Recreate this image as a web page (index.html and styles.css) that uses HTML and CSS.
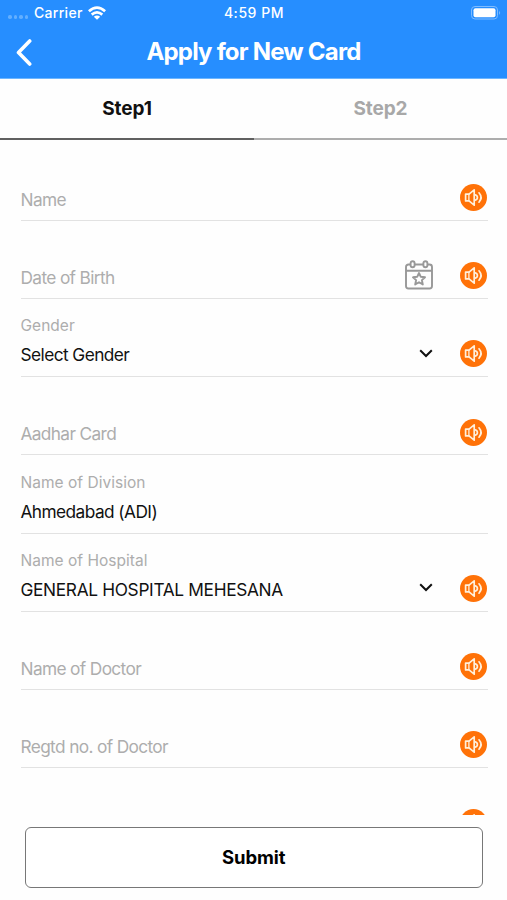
FILE: index.html
```html
<!DOCTYPE html>
<html lang="en">
<head>
<meta charset="utf-8">
<title>Apply for New Card</title>
<link rel="stylesheet" href="styles.css">
</head>
<body>
<svg class="defs" aria-hidden="true">
  <symbol id="speaker" viewBox="0 0 27 27">
    <circle cx="13.5" cy="13.5" r="13.5" fill="#ff7208"/>
    <g fill="none" stroke="#fff0dc" stroke-width="1.7" stroke-linejoin="round" stroke-linecap="round">
      <path d="M5.6 10.1H9L14.2 5.8V21.2L9 16.9H5.6Z"/>
      <path d="M8.9 10.2V16.8" stroke-width="1.3"/>
      <path d="M15.2 10.9Q17.4 11.4 17.4 13.5T15.2 16.1"/>
      <path d="M19 8.8Q23.2 13.5 19 18.2"/>
    </g>
  </symbol>
  <symbol id="chevron" viewBox="0 0 14 9">
    <path d="M1.2 1.3L7 7L12.8 1.3" fill="none" stroke="#111" stroke-width="2"/>
  </symbol>
</svg>
<div class="app">
  <header class="header">
    <div class="status">
      <div class="carrier">
        <span class="dots"><i></i><i></i><i></i><i></i></span>
        <span class="carrier-name">Carrier</span>
        <svg class="wifi" viewBox="0 0 18 14"><g fill="none" stroke="#fff" stroke-width="2.7"><path d="M.9 5.2Q9-2 17.1 5.2"/><path d="M3.7 8.6Q9 4.2 14.3 8.6"/></g><path d="M9 13.8L5.8 10.8Q9 8.3 12.2 10.8Z" fill="#fff"/></svg>
      </div>
      <span class="time">4:59 PM</span>
      <svg class="battery" viewBox="0 0 30 14"><rect x=".5" y=".5" width="26" height="12.5" rx="3.5" fill="none" stroke="#7fbcff"/><rect x="2.5" y="2.2" width="22" height="9" rx="2" fill="#fff"/><path d="M28.2 4.5Q30 6.7 28.2 9Z" fill="#8cc3ff"/></svg>
    </div>
    <div class="nav">
      <svg class="back" viewBox="0 0 16 27"><path d="M13.7 2L2.5 13.5L13.7 25" fill="none" stroke="#fff" stroke-width="3.6" stroke-linecap="round" stroke-linejoin="round"/></svg>
      <h1 class="title">Apply for New Card</h1>
    </div>
  </header>
  <nav class="tabs">
    <div class="tab active"><span>Step1</span></div>
    <div class="tab"><span>Step2</span></div>
  </nav>
  <main class="form">
    <div class="row"><div class="field"><span class="hint">Name</span></div><svg class="sound"><use href="#speaker"/></svg></div>
    <div class="row"><div class="field"><span class="hint">Date of Birth</span></div>
      <svg class="calendar" viewBox="0 0 28 30"><g fill="none" stroke="#989898" stroke-width="1.9" stroke-linejoin="round"><path d="M5 4.5H3.5Q1 4.5 1 7V26Q1 28.5 3.5 28.5H24.5Q27 28.5 27 26V7Q27 4.5 24.5 4.5H23M10 4.5H18M1 10.8H27"/><rect x="5.6" y="1.2" width="4" height="6" rx="2"/><rect x="18.4" y="1.2" width="4" height="6" rx="2"/><path d="M14 13L15.8 16.8L20 17.3L16.9 20.1L17.8 24.5L14 22.3L10.2 24.5L11.1 20.1L8 17.3L12.2 16.8Z"/></g></svg>
      <svg class="sound"><use href="#speaker"/></svg></div>
    <div class="row"><div class="field"><span class="label">Gender</span><span class="value">Select Gender</span></div><svg class="chevron"><use href="#chevron"/></svg><svg class="sound"><use href="#speaker"/></svg></div>
    <div class="row"><div class="field"><span class="hint">Aadhar Card</span></div><svg class="sound"><use href="#speaker"/></svg></div>
    <div class="row"><div class="field"><span class="label">Name of Division</span><span class="value">Ahmedabad (ADI)</span></div></div>
    <div class="row"><div class="field"><span class="label">Name of Hospital</span><span class="value caps">GENERAL HOSPITAL MEHESANA</span></div><svg class="chevron"><use href="#chevron"/></svg><svg class="sound"><use href="#speaker"/></svg></div>
    <div class="row"><div class="field"><span class="hint">Name of Doctor</span></div><svg class="sound"><use href="#speaker"/></svg></div>
    <div class="row"><div class="field"><span class="hint">Regtd no. of Doctor</span></div><svg class="sound"><use href="#speaker"/></svg></div>
    <div class="row"><div class="field"></div><svg class="sound"><use href="#speaker"/></svg></div>
  </main>
  <footer class="footer"><button class="submit" type="button">Submit</button></footer>
</div>
</body>
</html>
```

FILE: styles.css
```css
* { box-sizing: border-box; }
body { margin: 0; background: #fefefe; font-family: Inter, "Liberation Sans", sans-serif; color: #111; }
.defs { display: none; }
.app { display: flex; flex-direction: column; width: 507px; height: 900px; overflow: hidden; }
.header { height: 79px; flex: none; background: #268eff; color: #fff; border-bottom: 1px solid #6db6ff; }
.status { display: grid; grid-template-columns: 1fr auto 1fr; align-items: center; height: 26px; padding: 0 7px 0 8px; font-size: 14px; font-weight: 500; line-height: 18px; }
.carrier { display: flex; align-items: center; }
.dots { display: flex; gap: 2px; width: 26px; padding-top: 8px; }
.dots i { width: 3.5px; height: 3.5px; border-radius: 50%; background: #63afff; }
.carrier-name { width: 49px; letter-spacing: .3px; white-space: nowrap; }
.time { letter-spacing: .55px; }
.wifi { width: 18px; height: 14px; margin-left: 5px; }
.battery { width: 30px; height: 14px; justify-self: end; margin-right: -1px; }
.nav { display: grid; grid-template-columns: 50px 1fr 50px; align-items: center; height: 52px; }
.back { width: 16px; height: 27px; margin-left: 16px; }
.title { margin: 0; text-align: center; font-size: 24px; font-weight: 700; letter-spacing: -.8px; line-height: 30px; white-space: nowrap; }
.tabs { display: grid; grid-template-columns: 254px 253px; flex: none; height: 61px; font-size: 19px; line-height: 23px; font-weight: 700; letter-spacing: -.1px; }
.tab { display: flex; align-items: center; justify-content: center; color: #a8a8a8; border-bottom: 2px solid #adadad; }
.active { color: #111; border-color: #606060; }
.form { flex: none; height: 674.5px; padding: 2.6px 19.5px 0 20.5px; overflow: hidden; }
.row { display: flex; align-items: flex-end; height: 78.2px; border-bottom: 1.4px solid #e2e2e2; }
.field { flex: 1; display: flex; flex-direction: column; align-items: flex-start; padding-bottom: 9px; white-space: nowrap; }
.hint { font-size: 17.3px; line-height: 24px; color: #adadad; letter-spacing: -.64px; margin-bottom: -1px; }
.label { font-size: 15.5px; line-height: 20px; color: #adadad; margin-bottom: 7px; letter-spacing: .03px; }
.value { font-size: 17.3px; line-height: 24px; letter-spacing: -.57px; }
.caps { letter-spacing: -.33px; }
.sound { width: 27px; height: 27px; margin: 0 .5px 8.8px 0; }
.calendar { width: 28px; height: 30px; margin: 0 27.5px 8px 0; }
.chevron { width: 14px; height: 9px; margin: 0 27px 18.5px 0; }
.footer { padding: 12px 24.5px 0 25px; }
.submit { width: 100%; height: 61.5px; padding: 0; border: 1.4px solid #777; border-radius: 6px; background: #fff; color: #000; font: 700 18.5px Inter, sans-serif; letter-spacing: -.1px; }
```
